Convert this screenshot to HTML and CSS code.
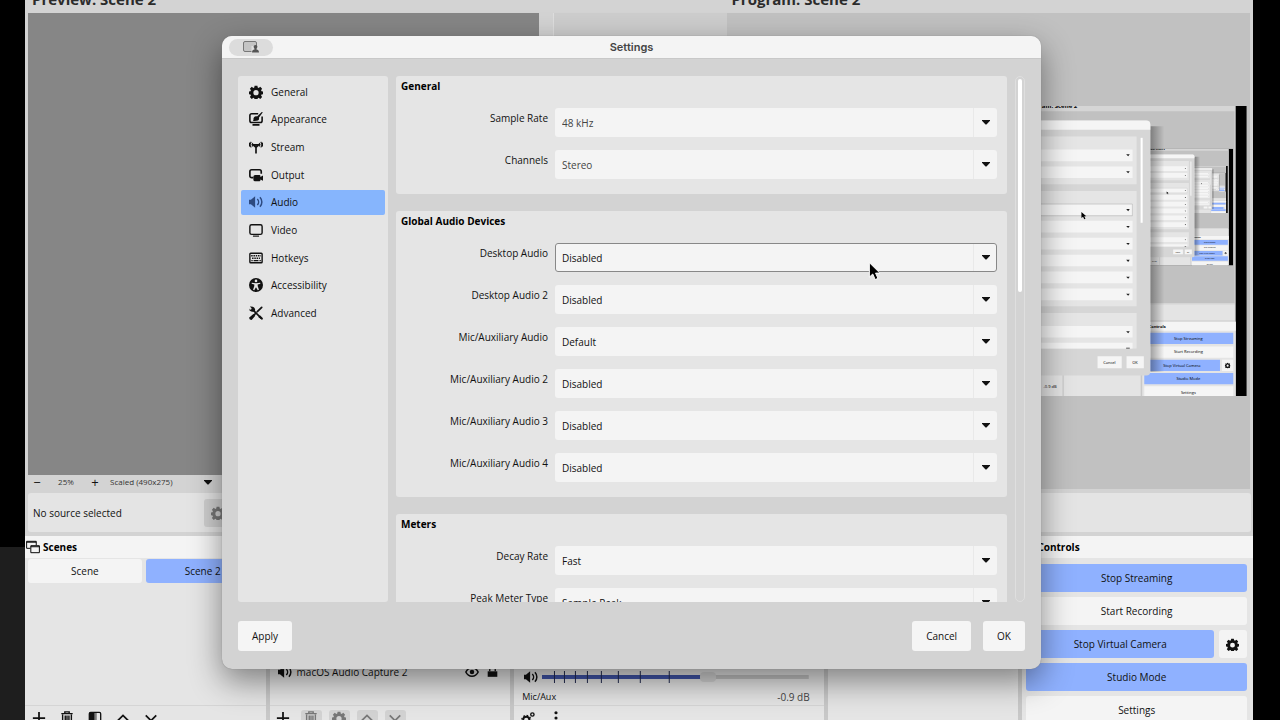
FILE: index.html
```html
<!DOCTYPE html>
<html lang="en">
<head>
<meta charset="utf-8">
<title>Settings</title>
<link rel="stylesheet" href="styles.css">
</head>
<body>
<svg class="sprite" aria-hidden="true">
  <symbol id="i-gear" viewBox="0 0 16 16"><path fill="currentColor" fill-rule="evenodd" d="M6.400 .8h3.200l.4 2 1 .5 1.900-1.200 2.100 2.100-1.200 1.900.5 1 2 .4v3l-2 .4-.5 1 1.200 1.900-2.100 2.100-1.900-1.200-1 .5-.4 2H6.400l-.4-2-1-.5-1.900 1.200L1 13.800l1.200-1.900-.5-1-2-.4v-3l2-.4.5-1L1 4.200l2.100-2.100L5 3.300l1-.5zM8 5.800a3 3 0 1 0 0 6 3 3 0 0 0 0-6z"/></symbol>
  <symbol id="i-look" viewBox="0 0 16 16"><path fill="none" stroke="currentColor" stroke-width="1.800" d="M10.500 2H3a2 2 0 0 0-2 2v6a2 2 0 0 0 2 2h10a2 2 0 0 0 2-2V5M4 14.700h8"/><path fill="currentColor" d="M15.800.4 11.300 6.500c1 3-1.300 4.100-6.800 3.700 1-.8.4-1.500.7-3 .6-2.300 2.500-2.800 4-2.200L14.600 0z"/></symbol>
  <symbol id="i-stream" viewBox="0 0 16 16"><path fill="none" stroke="currentColor" stroke-width="1.200" d="M4.500 3.400a3 3 0 0 0 0 4M11.500 3.400a3 3 0 0 1 0 4M2.600 2.200a5 5 0 0 0 0 6.300M13.400 2.200a5 5 0 0 1 0 6.300M.8 3a5 5 0 0 0 0 4.500M15.200 3a5 5 0 0 1 0 4.500"/><path fill="none" stroke="currentColor" stroke-width="1.900" d="M8 7v8.500M5 5.500 8 8.500l3-3z"/></symbol>
  <symbol id="i-output" viewBox="0 0 16 16"><path fill="none" stroke="currentColor" stroke-width="1.900" d="M5 11H3a2 2 0 0 1-2-2V4a2 2 0 0 1 2-2h9a2 2 0 0 1 2 2v2.500"/><path fill="currentColor" d="M7 8h5a1 1 0 0 1 1 1v1.200L16 8.500v6L13 13v1a1 1 0 0 1-1 1H6.500A1.500 1.500 0 0 1 5 13.500V10a2 2 0 0 1 2-2z"/></symbol>
  <symbol id="i-audio" viewBox="0 0 16 16"><path fill="currentColor" d="M0 5.500h2.200L7 1.500v13l-4.800-4H0z"/><path fill="none" stroke="currentColor" stroke-width="1.700" d="M9.500 4.500a5 5 0 0 1 0 7M12.500 2.500a8 8 0 0 1 0 11"/></symbol>
  <symbol id="i-video" viewBox="0 0 16 16"><rect x="1" y="2" width="14" height="11" rx="2" fill="none" stroke="currentColor" stroke-width="1.600"/><path stroke="currentColor" stroke-width="1.300" d="M4.500 15h7"/></symbol>
  <symbol id="i-keys" viewBox="0 0 16 16"><rect x="1" y="2.500" width="14" height="11" rx="1" fill="none" stroke="currentColor" stroke-width="1.600"/><path fill="none" stroke="currentColor" stroke-width="1.800" stroke-dasharray="1.700 .9" d="M2.500 5.400h11M3.500 8.200h9"/><path stroke="currentColor" stroke-width="1.500" d="M2.700 11h1.500M5.300 11h5.500M12 11h1.500"/></symbol>
  <symbol id="i-access" viewBox="0 0 16 16"><circle cx="8" cy="8" r="8" fill="currentColor"/><g fill="#e5e5e5"><circle cx="8" cy="3.300" r="1.500"/><path d="M3.200 5.300 8 6l4.800-.7.2 1.300-3.100.8.100 2 1.400 4-1.400.5L8 10.500l-2 3.400-1.400-.5 1.400-4 .1-2L3 6.600z"/></g></symbol>
  <symbol id="i-tools" viewBox="0 0 16 16"><path stroke="currentColor" stroke-width="2" stroke-linecap="round" fill="none" d="M4.500 4.500 14 14M14.500 1.500 9.500 6.500M7 9l-4 4"/><path fill="currentColor" d="M1 .5 3 2.500 2.500 4 .7 4.200-.1 2.600A4 4 0 0 0 5 6.500L7 5c.4-2.500-1.500-5-6-4.500zM0 13.500 5 9l2.200 2L3 16l-2-.5zM15 16l1-2-3.500-3.500-2 2z"/></symbol>
  <symbol id="i-down" viewBox="0 0 10 6"><path fill="currentColor" d="M0 0h10v.7L5.600 5.500H4.400L0 .7z"/></symbol>
  <symbol id="i-plus" viewBox="0 0 16 16"><path stroke="currentColor" stroke-width="2" d="M8 1v14M1 8h14"/></symbol>
  <symbol id="i-trash" viewBox="0 0 16 16"><path fill="none" stroke="currentColor" stroke-width="1.600" d="M1.500 3h13M5.500 2.500V1h5v1.500M3 4v11h10V4M6 5v9M8 5v9M10.200 5v9"/></symbol>
  <symbol id="i-filter" viewBox="0 0 16 16"><rect x="1.500" y="1.500" width="13" height="13" rx="1.500" fill="none" stroke="currentColor" stroke-width="1.500"/><path fill="currentColor" d="M2 2h5.500v12H2z"/><path fill="currentColor" opacity=".5" d="M7.500 2H10v12H7.500z"/></symbol>
  <symbol id="i-up" viewBox="0 0 16 16"><path fill="none" stroke="currentColor" stroke-width="2" d="m2 11 6-6 6 6"/></symbol>
  <symbol id="i-chev" viewBox="0 0 16 16"><path fill="none" stroke="currentColor" stroke-width="2" d="m2 5 6 6 6-6"/></symbol>
  <symbol id="i-dots" viewBox="0 0 16 16"><g fill="currentColor"><circle cx="8" cy="2" r="1.800"/><circle cx="8" cy="8" r="1.800"/><circle cx="8" cy="14" r="1.800"/></g></symbol>
  <symbol id="i-gears" viewBox="0 0 16 16"><g fill="none" stroke="currentColor"><circle cx="6" cy="10" r="3.500" stroke-width="2.200"/><circle cx="6" cy="10" r="5" stroke-width="1.500" stroke-dasharray="1.800 2.100"/><circle cx="13" cy="4" r="1.900" stroke-width="1.600"/></g></symbol>
  <symbol id="i-eye" viewBox="0 0 16 16"><path fill="none" stroke="currentColor" stroke-width="1.800" d="M1 8c3-6.500 11-6.500 14 0-3 6.500-11 6.500-14 0z"/><circle cx="8" cy="8" r="2.600" fill="currentColor"/></symbol>
  <symbol id="i-lock" viewBox="0 0 16 16"><path fill="currentColor" d="M1 7h14v8H1z"/><path fill="none" stroke="currentColor" stroke-width="2" d="M4 7V4a4 4 0 0 1 8 0v3"/></symbol>
  <symbol id="i-windows" viewBox="0 0 16 16"><g fill="none" stroke="currentColor" stroke-width="1.100"><path d="M5 9.500H.7V1.500h11V6M.7 2.500h11"/><path d="M5.500 6.500h9.800v8H5.500zM5.500 7.700h9.800"/></g></symbol>
</svg>

<main class="app">
  <section class="views">
    <div class="view view-preview">
      <h2 class="view-title">Preview: Scene 2</h2>
      <div class="canvas"></div>
      <div class="zoombar">
        <button type="button" aria-label="Zoom out">−</button>
        <span>25%</span>
        <button type="button" aria-label="Zoom in">+</button>
        <button type="button" class="scaled">Scaled (490x275)<svg><use href="#i-down"/></svg></button>
      </div>
    </div>
    <div class="transition"></div>
    <div class="view view-program">
      <h2 class="view-title">Program: Scene 2</h2>
      <div class="program">
        <svg class="feed" viewBox="0 0 1280 720" role="img" aria-label="Program output">
          <defs>
            <linearGradient id="shade" x1="0" x2="1"><stop offset="0" stop-color="#000" stop-opacity=".35"/><stop offset="1" stop-color="#000" stop-opacity="0"/></linearGradient>
            <clipPath id="screen"><path d="M0 0h1280v720H0z"/></clipPath>
            <g id="m-back">
              <path fill="#000" d="M0 0h1280v720H0z"/>
              <path fill="#d5d5d5" d="M25 0h1228v720H25z"/>
              <text class="m-title" x="731" y="6">Program: Scene 2</text>
              <path fill="#c1c1c1" d="M727 13h523v476H727z"/>
              <path fill="#e4e4e4" d="M28 493h1223v39H28zM25 535h1228v185H25z"/>
              <path fill="#c8c8c8" d="M823 640h3v80h-3zM1017 640h4v80h-4z"/>
              <path fill="#f5f5f5" d="M1022 536h231v22h-231zM1026 597h221v28h-221zM1219 630h28v28h-28zM1026 696h221v24h-221z"/>
              <path fill="#8fb1ff" d="M1026 563h221v28h-221zM1026 630h188v28h-188zM1026 663h221v28h-221z"/>
              <g class="m-text"><text x="1037" y="550" class="m-bold">Controls</text><text x="1100" y="581">Stop Streaming</text><text x="1100" y="614">Start Recording</text><text x="1073" y="648">Stop Virtual Camera</text><text x="1106" y="681">Studio Mode</text><text x="1117" y="715">Settings</text><text x="776" y="701">-0.9 dB</text></g>
              <use href="#i-gear" x="1226" y="637" width="14" height="14"/>
            </g>
            <g id="m-front">
              <path fill="url(#shade)" d="M1041 50h35v610h-35z"/>
              <rect x="222" y="36" width="819" height="633" rx="10" fill="#d6d6d6"/>
              <path fill="#f5f5f5" d="M222 59V46q0-10 10-10h799q10 0 10 10v13z"/>
              <path fill="#e5e5e5" d="M396 76h611v118H396zM396 211h611v286H396zM396 514h611v88H396z"/>
              <path fill="#f5f5f5" d="M555 108h442v29H555zM555 150h442v29H555zM555 243h442v29H555zM555 285h442v29H555zM555 327h442v29H555zM555 369h442v29H555zM555 411h442v29H555zM555 453h442v29H555zM555 546h442v29H555zM555 588h442v14H555zM910 621h60v30h-60zM982 621h43v30h-43z"/>
              <path fill="none" stroke="#999" d="M555.500 243.500h441v29h-441z"/>
              <path fill="#222" d="M981 120h9l-4 5zM981 162h9l-4 5zM981 256h9l-4 5zM981 298h9l-4 5zM981 340h9l-4 5zM981 382h9l-4 5zM981 424h9l-4 5zM981 466h9l-4 5zM981 559h9l-4 5zM981 600h9v2h-9z"/>
              <path fill="#fff" d="M1017 79h5v211h-5z"/>
              <path fill="#000" d="m870 263 0 15 4-3 3 6 3-1-3-6h5z"/>
              <g class="m-text"><text x="924" y="640">Cancel</text><text x="996" y="640">OK</text></g>
            </g>
            <g id="m-4" clip-path="url(#screen)"><use href="#m-back"/><use href="#m-front"/></g>
            <g id="m-3" clip-path="url(#screen)"><use href="#m-back"/><use href="#m-4" transform="translate(731 106) scale(.403)"/><use href="#m-front"/></g>
            <g id="m-2" clip-path="url(#screen)"><use href="#m-back"/><use href="#m-3" transform="translate(731 106) scale(.403)"/><use href="#m-front"/></g>
          </defs>
          <use href="#m-back"/><use href="#m-2" transform="translate(731 106) scale(.403)"/><use href="#m-front"/>
        </svg>
      </div>
    </div>
  </section>

  <section class="sourcebar">
    <span>No source selected</span>
    <button type="button" aria-label="Properties" disabled><svg class="ic"><use href="#i-gear"/></svg></button>
  </section>

  <section class="docks">
    <section class="dock scenes">
      <h3><svg class="ic"><use href="#i-windows"/></svg>Scenes</h3>
      <div class="scene-grid">
        <button type="button">Scene</button>
        <button type="button" class="on">Scene 2</button>
      </div>
      <div class="tools">
        <button type="button" aria-label="Add"><svg class="ic"><use href="#i-plus"/></svg></button>
        <button type="button" aria-label="Remove"><svg class="ic"><use href="#i-trash"/></svg></button>
        <button type="button" aria-label="Filters"><svg class="ic"><use href="#i-filter"/></svg></button>
        <button type="button" aria-label="Up"><svg class="ic"><use href="#i-up"/></svg></button>
        <button type="button" aria-label="Down"><svg class="ic"><use href="#i-chev"/></svg></button>
      </div>
    </section>
    <section class="dock sources">
      <div class="source"><svg class="ic"><use href="#i-audio"/></svg><span>macOS Audio Capture 2</span><svg class="ic"><use href="#i-eye"/></svg><svg class="ic lock"><use href="#i-lock"/></svg></div>
      <div class="tools">
        <button type="button" aria-label="Add"><svg class="ic"><use href="#i-plus"/></svg></button>
        <button type="button" aria-label="Remove" disabled><svg class="ic"><use href="#i-trash"/></svg></button>
        <button type="button" aria-label="Properties" disabled><svg class="ic"><use href="#i-gear"/></svg></button>
        <button type="button" aria-label="Up" disabled><svg class="ic"><use href="#i-up"/></svg></button>
        <button type="button" aria-label="Down" disabled><svg class="ic"><use href="#i-chev"/></svg></button>
      </div>
    </section>
    <section class="dock mixer">
      <div class="fader">
        <svg class="ic"><use href="#i-audio"/></svg>
        <div class="track">
          <input type="range" min="0" max="100" value="63" aria-label="Desktop volume">
          <svg class="ticks" viewBox="0 0 267 12" preserveAspectRatio="none"><path stroke="#222b50" d="M12.500 0v12M22.500 0v12M33.500 0v12M45.500 0v12M59.500 0v12M76.500 0v12M98.500 0v12M127.500 0v12"/></svg>
        </div>
      </div>
      <div class="channel"><span>Mic/Aux</span><span class="db">-0.9 dB</span></div>
      <div class="tools">
        <button type="button" aria-label="Advanced audio"><svg class="ic"><use href="#i-gears"/></svg></button>
        <button type="button" aria-label="Menu"><svg class="ic"><use href="#i-dots"/></svg></button>
      </div>
    </section>
    <section class="dock transitions"></section>
    <section class="dock controls">
      <h3>Controls</h3>
      <div class="control-list">
        <button type="button" class="on">Stop Streaming</button>
        <button type="button">Start Recording</button>
        <div class="pair"><button type="button" class="on">Stop Virtual Camera</button><button type="button" aria-label="Virtual camera settings"><svg class="ic"><use href="#i-gear"/></svg></button></div>
        <button type="button" class="on">Studio Mode</button>
        <button type="button">Settings</button>
      </div>
    </section>
  </section>
</main>

<div class="dialog" role="dialog" aria-labelledby="dlg-title">
  <header class="titlebar">
    <button type="button" class="pill" aria-label="Screen sharing"><svg viewBox="0 0 16 12"><rect x=".5" y=".5" width="13" height="10" rx="1.500" fill="#c4c4c4" stroke="#777"/><path fill="#e0e0e0" d="M8.500 5h7.500v7H8.500z"/><circle cx="12.500" cy="5.800" r="1.900" fill="#555"/><path fill="#555" d="M9 11.500c0-2 1-3 2.500-3V7h2v1.500c1.500 0 2.500 1 2.500 3z"/></svg></button>
    <h1 id="dlg-title">Settings</h1>
  </header>
  <div class="panes">
    <nav class="side">
      <ul>
        <li><button type="button"><svg class="ic"><use href="#i-gear"/></svg>General</button></li>
        <li><button type="button"><svg class="ic"><use href="#i-look"/></svg>Appearance</button></li>
        <li><button type="button"><svg class="ic"><use href="#i-stream"/></svg>Stream</button></li>
        <li><button type="button"><svg class="ic"><use href="#i-output"/></svg>Output</button></li>
        <li><button type="button" class="current"><svg class="ic"><use href="#i-audio"/></svg>Audio</button></li>
        <li><button type="button"><svg class="ic"><use href="#i-video"/></svg>Video</button></li>
        <li><button type="button"><svg class="ic"><use href="#i-keys"/></svg>Hotkeys</button></li>
        <li><button type="button"><svg class="ic"><use href="#i-access"/></svg>Accessibility</button></li>
        <li><button type="button"><svg class="ic"><use href="#i-tools"/></svg>Advanced</button></li>
      </ul>
    </nav>
    <div class="content">
      <section class="group">
        <h2>General</h2>
        <div class="row"><label for="rate">Sample Rate</label><div class="combo"><select id="rate" class="dim"><option>48 kHz</option></select><svg><use href="#i-down"/></svg></div></div>
        <div class="row"><label for="chan">Channels</label><div class="combo"><select id="chan" class="dim"><option>Stereo</option></select><svg><use href="#i-down"/></svg></div></div>
      </section>
      <section class="group">
        <h2>Global Audio Devices</h2>
        <div class="row"><label for="d1">Desktop Audio</label><div class="combo hot"><select id="d1"><option>Disabled</option></select><svg><use href="#i-down"/></svg></div></div>
        <div class="row"><label for="d2">Desktop Audio 2</label><div class="combo"><select id="d2"><option>Disabled</option></select><svg><use href="#i-down"/></svg></div></div>
        <div class="row"><label for="m1">Mic/Auxiliary Audio</label><div class="combo"><select id="m1"><option>Default</option></select><svg><use href="#i-down"/></svg></div></div>
        <div class="row"><label for="m2">Mic/Auxiliary Audio 2</label><div class="combo"><select id="m2"><option>Disabled</option></select><svg><use href="#i-down"/></svg></div></div>
        <div class="row"><label for="m3">Mic/Auxiliary Audio 3</label><div class="combo"><select id="m3"><option>Disabled</option></select><svg><use href="#i-down"/></svg></div></div>
        <div class="row"><label for="m4">Mic/Auxiliary Audio 4</label><div class="combo"><select id="m4"><option>Disabled</option></select><svg><use href="#i-down"/></svg></div></div>
      </section>
      <section class="group">
        <h2>Meters</h2>
        <div class="row"><label for="decay">Decay Rate</label><div class="combo"><select id="decay"><option>Fast</option></select><svg><use href="#i-down"/></svg></div></div>
        <div class="row"><label for="peak">Peak Meter Type</label><div class="combo"><select id="peak"><option>Sample Peak</option></select><svg><use href="#i-down"/></svg></div></div>
      </section>
    </div>
    <div class="scrollbar"><div class="thumb"></div></div>
  </div>
  <footer class="actions">
    <button type="button">Apply</button>
    <span class="spacer"></span>
    <button type="button">Cancel</button>
    <button type="button" class="ok">OK</button>
  </footer>
</div>

<svg class="pointer" viewBox="0 0 14 22" aria-hidden="true"><path fill="#000" stroke="#fff" d="M1.500 1.500v15.500l3.600-3.300 2.700 6 2.900-1.300-2.600-5.700h4.700z"/></svg>
</body>
</html>
```

FILE: styles.css
```css
* { box-sizing: border-box; }

body {
  margin: 0;
  height: 100vh;
  overflow: hidden;
  position: relative;
  background: linear-gradient(#000 0 76%, #1e1e1e 76%);
  font: 10px/16px "Open Sans", "Noto Sans", sans-serif;
  color: #111;
}

h1, h2, h3, ul { margin: 0; padding: 0; font-size: 10px; }
h2, h3 { color: #000; }
ul { list-style: none; }
button, select {
  font: inherit;
  color: inherit;
  border: 0;
  margin: 0;
  padding: 0;
  background: none;
}
svg { display: block; flex: none; }
.sprite { position: absolute; width: 0; height: 0; }
.ic { width: 14px; height: 14px; }

/* main window */
.app {
  height: 100%;
  margin-left: 25px;
  border-right: 27px solid #000;
  background: #d3d3d3;
  display: flex;
  flex-direction: column;
  overflow: hidden;
}
.views { flex: 1; display: flex; padding: 0 3px; min-height: 0; }
.view { display: flex; flex-direction: column; }
.view-preview { flex: 525; }
.transition { flex: 174; background: #cdcdcd; border-left: 1px solid #dedede; margin-top: 13px; }
.view-program { flex: 523; }
.view-title {
  height: 13px;
  padding-left: 4px;
  display: flex;
  align-items: flex-end;
  font-size: 15px;
  line-height: 28px;
  color: #2b2b2b;
  white-space: nowrap;
}
.canvas { flex: 1; background: #868686; margin-right: 14px; }
.zoombar {
  height: 14px;
  display: flex;
  align-items: center;
  font-size: 8px;
  color: #333;
}
.zoombar button:not(.scaled) { width: 18px; font-size: 13px; line-height: 14px; color: #111; }
.zoombar span { width: 40px; text-align: center; }
.scaled { width: 102px; margin-left: 6px; display: flex; align-items: center; justify-content: space-between; }
.scaled svg { width: 8px; height: 5px; color: #111; }
.program {
  flex: 1;
  padding: 0 3px 0 4px;
  background: #c1c1c1;
  display: flex;
  align-items: center;
}
.feed { width: 100%; height: auto; }
.m-title { font-size: 15px; font-weight: 700; }
.m-text { font-size: 10px; }
.m-bold { font-weight: 700; }

.sourcebar {
  height: 39px;
  margin: 4px 2px 4px 3px;
  padding: 0 5px;
  border-radius: 3px;
  background: #e4e4e4;
  display: flex;
  align-items: center;
}
.sourcebar span { width: 171px; }
.sourcebar button { width: 28px; height: 28px; display: grid; place-items: center; border-radius: 3px; background: #cfcfcf; color: #777; }

.docks {
  height: 184px;
  display: grid;
  grid-template-columns: 241fr 241fr 310fr 191fr 231fr;
  gap: 4px;
  background: #c8c8c8;
}
.dock { background: #e5e5e5; display: flex; flex-direction: column; justify-content: flex-end; overflow: hidden; min-width: 0; min-height: 0; }
.dock h3 {
  height: 22px;
  flex: none;
  padding-left: 1px;
  background: #f4f4f4;
  display: flex;
  align-items: center;
  gap: 3px;
}
.scene-grid { flex: 1; display: grid; grid-template-columns: 1fr 1fr; gap: 4px; padding: 1px 6px 0 3px; align-content: start; }
.scene-grid button { height: 24px; }
.scene-grid button, .control-list button { border-radius: 3px; background: #f4f4f4; }
.scene-grid .on, .control-list .on { background: #8fb1ff; }
.tools { height: 15px; border-top: 1px solid #d5d5d5; padding: 4px 3px 0 3px; display: flex; gap: 7px; flex: none; }
.tools button { width: 21px; height: 22px; flex: none; display: grid; place-items: start center; border-radius: 3px; }
.tools .ic { margin-top: 1px; }
.tools button:disabled { background: #d2d2d2; color: #777; }
.source { height: 24px; margin-bottom: 21px; padding: 0 12px 0 8px; display: flex; align-items: center; gap: 5px; }
.source span { flex: 1; }
.source .lock { width: 11px; height: 12px; margin-left: 3px; }
.fader { height: 18px; margin-bottom: 3px; padding: 0 15px 0 10px; display: flex; align-items: center; gap: 4px; }
.track { flex: 1; position: relative; display: flex; }
.track input {
  appearance: none;
  width: 100%;
  height: 12px;
  margin: 0;
  background: linear-gradient(90deg, #4055a8 62%, #c2c2c2 62%) center / 100% 4px no-repeat;
}
.track input::-webkit-slider-thumb { appearance: none; width: 16px; height: 10px; border-radius: 4px; background: #d4d4d4; }
.ticks { position: absolute; inset: 0; width: 100%; height: 12px; }
.channel { height: 16px; padding: 0 14px 0 8px; display: flex; align-items: center; justify-content: space-between; font-size: 9px; }
.db { font-size: 10px; color: #444; }
.controls h3 { padding-left: 15px; }
.control-list { flex: 1; min-height: 0; padding: 6px 6px 0 4px; display: grid; grid-auto-rows: 28px; gap: 5px; align-content: start; }
.pair { display: grid; grid-template-columns: 1fr 28px; gap: 5px; }
.pair .ic { margin: auto; width: 13px; height: 13px; }

/* settings dialog */
.dialog {
  position: absolute;
  inset: 36px 239px 51px 222px;
  border-radius: 10px;
  background: #d3d3d3;
  display: flex;
  flex-direction: column;
  box-shadow: 0 0 1px #777, 0 12px 32px rgba(0, 0, 0, .45);
}
.titlebar {
  height: 23px;
  padding: 0 7px;
  border-radius: 10px 10px 0 0;
  background: #f4f4f4;
  border-bottom: 1px solid #c8c8c8;
  display: grid;
  grid-template-columns: 44px 1fr 44px;
  align-items: center;
}
.titlebar h1 { font: 600 11px/16px Inter, sans-serif; color: #444; text-align: center; }
.pill { height: 17px; border-radius: 9px; background: #dcdcdc; display: grid; place-items: center; }
.pill svg { width: 16px; height: 12px; }
.panes { flex: 1; min-height: 0; display: flex; padding: 17px 16px 0; }
.side { width: 150px; padding: 2px 3px; border-radius: 3px; background: #e5e5e5; }
.side ul { height: 249px; display: grid; grid-template-rows: repeat(9, 1fr); }
.side li { padding: 1px 0; display: flex; }
.side button { flex: 1; padding-left: 8px; display: flex; align-items: center; gap: 8px; border-radius: 2px; }
.side .current { background: #86b5fd; }
.side .current .ic { color: #2d4a80; }
.content { flex: 1; margin-left: 8px; overflow: hidden; }
.group { padding: 1px 10px 15px 5px; margin-bottom: 17px; border-radius: 3px; background: #e5e5e5; display: grid; gap: 13px; }
.group h2 { height: 18px; line-height: 18px; }
.row { height: 29px; display: grid; grid-template-columns: 147px 1fr; gap: 7px; }
.row label { text-align: right; line-height: 20px; }
.combo {
  display: grid;
  grid-template-columns: 1fr 23px;
  align-items: center;
  border-radius: 3px;
  background: linear-gradient(#e9e9e9, #e9e9e9) right 23px top 0 / 1px 100% no-repeat #f4f4f4;
}
.combo select { appearance: none; grid-area: 1 / 1 / 2 / 3; height: 29px; padding: 0 7px; width: 100%; border-radius: 3px; }
.combo svg { grid-area: 1 / 2; width: 8px; height: 5px; justify-self: center; pointer-events: none; }
.combo.hot select { border: 1px solid #888; padding: 0 6px; }
.combo .dim { color: #444; }
.scrollbar { width: 10px; margin-left: 8px; padding: 2px; border: 1px solid #dfdfdf; border-radius: 5px; }
.thumb { height: 41%; border-radius: 3px; background: #fff; }
.actions { display: flex; gap: 12px; padding: 19px 16px 18px; }
.actions button { height: 30px; padding: 0 14px; border-radius: 3px; background: #f5f5f5; }
.spacer { flex: 1; }

.pointer { position: absolute; left: 868px; top: 261px; width: 13px; height: 21px; }
```
